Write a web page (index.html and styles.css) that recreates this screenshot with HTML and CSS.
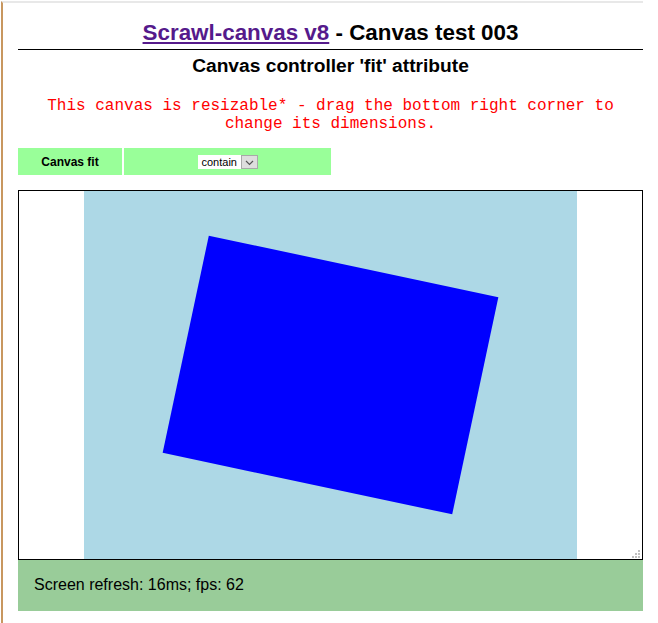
FILE: index.html
```html
<!DOCTYPE html>
<html lang="en">
<head>
<meta charset="utf-8">
<title>Scrawl-canvas v8 - Canvas test 003</title>
<link rel="stylesheet" href="styles.css">
</head>
<body>
<div class="frame">
  <h1 class="title"><a href="#" class="home">Scrawl-canvas v8</a> - Canvas test 003</h1>
  <h2 class="subtitle">Canvas controller 'fit' attribute</h2>
  <p class="note">This canvas is resizable* - drag the bottom right corner to change its dimensions.</p>
  <div class="controls">
    <div class="cell label">Canvas fit</div>
    <div class="cell">
      <div class="select">
        <span class="value">contain</span>
        <span class="arrow"><svg width="15" height="12" viewBox="0 0 15 12"><polyline points="4,5 7.5,8.5 11,5" fill="none" stroke="#555" stroke-width="1.2"/></svg></span>
      </div>
    </div>
  </div>
  <div class="stage">
    <div class="canvas">
      <svg width="493" height="368" viewBox="0 0 493 368">
        <rect x="0" y="0" width="493" height="368" fill="#add8e6"/>
        <rect x="98.5" y="73" width="296" height="222" fill="#0000ff" transform="rotate(12 246.5 184)"/>
      </svg>
    </div>
    <svg class="grip" width="8" height="8" viewBox="0 0 8 8">
      <rect x="6" y="0" width="2" height="2" fill="#c0c0c0"/>
      <rect x="3" y="3" width="2" height="2" fill="#c0c0c0"/>
      <rect x="6" y="3" width="2" height="2" fill="#c0c0c0"/>
      <rect x="0" y="6" width="2" height="2" fill="#c0c0c0"/>
      <rect x="3" y="6" width="2" height="2" fill="#c0c0c0"/>
      <rect x="6" y="6" width="2" height="2" fill="#c0c0c0"/>
    </svg>
  </div>
  <div class="report">Screen refresh: 16ms; fps: 62</div>
</div>
</body>
</html>
```

FILE: styles.css
```css
html, body {
  margin: 0;
  padding: 0;
  background: #ffffff;
}

body {
  font-family: "Liberation Sans", Arial, sans-serif;
  color: #000;
}

.frame {
  margin: 1px 0 0 1px;
  border-top: 2px solid #e8e8e8;
  border-left: 2px solid #c8975f;
  padding: 17px 0 40px 15px;
  width: 625px;
  min-height: 560px;
}

.title {
  margin: 0;
  font-size: 22.4px;
  line-height: 25px;
  font-weight: bold;
  text-align: center;
  padding-bottom: 4px;
  border-bottom: 1px solid #000;
}

.home {
  color: #551a8b;
  text-decoration: underline;
}

.subtitle {
  margin: 5px 0 0;
  font-size: 19.2px;
  line-height: 21px;
  font-weight: bold;
  text-align: center;
}

.note {
  margin: 21px 0 0;
  font-family: "Liberation Mono", "Courier New", monospace;
  font-size: 16px;
  line-height: 18px;
  color: #ff0000;
  text-align: center;
}

.controls {
  margin-top: 15px;
  display: grid;
  grid-template-columns: 104px 207px;
  column-gap: 2px;
  height: 27px;
}

.cell {
  background: #99ff99;
  display: flex;
  align-items: center;
  justify-content: center;
}

.label {
  font-size: 12px;
  font-weight: bold;
}

.select {
  display: flex;
  align-items: stretch;
  height: 14px;
  margin-top: 1px;
}

.value {
  width: 39px;
  padding-left: 4px;
  background: #fff;
  font-size: 11px;
  line-height: 14px;
  color: #000;
}

.arrow {
  width: 15px;
  height: 12px;
  border: 1px solid #a9a9a9;
  background: #dedede;
  display: block;
}

.arrow svg {
  display: block;
}

.stage {
  position: relative;
  margin-top: 15px;
  height: 368px;
  border: 1px solid #000;
  background: #fff;
  display: flex;
  justify-content: center;
}

.canvas svg {
  display: block;
}

.grip {
  position: absolute;
  right: 2px;
  bottom: 1px;
  display: block;
}

.report {
  background: #99cc99;
  padding: 16px 16px 0;
  height: 35px;
  font-size: 16px;
  line-height: 18px;
}
```
